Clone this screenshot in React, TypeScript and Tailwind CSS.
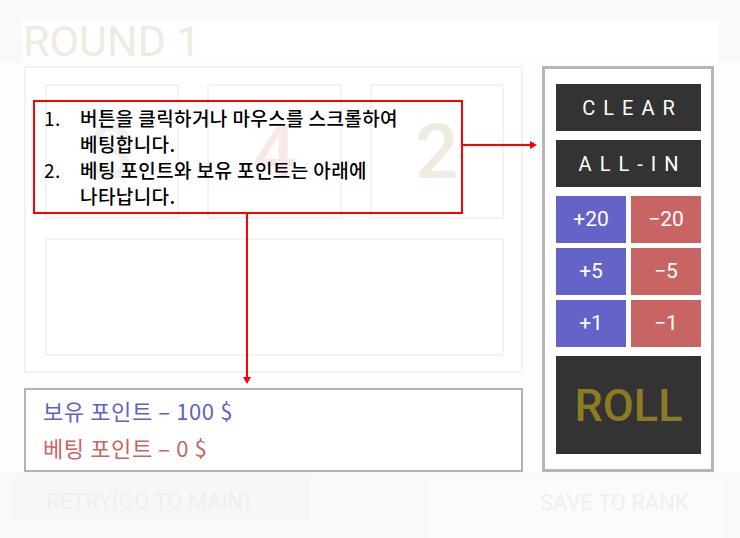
import React from "react";

const latin = "font-['Roboto','Noto_Sans_CJK_KR',sans-serif]";
const kr = "font-['Noto_Sans_CJK_KR','Noto_Sans',sans-serif]";

function Card({ n, color }: { n: string; color: string }) {
  return (
    <div className="w-[135px] h-[135px] border-2 border-[#f3f3f3] bg-white flex items-center justify-center">
      <span className={`${latin} text-[76px] font-medium leading-none ${color}`}>{n}</span>
    </div>
  );
}

function Btn({ label, cls }: { label: string; cls: string }) {
  return (
    <div className={`h-[47px] flex items-center justify-center text-white ${cls}`}>{label}</div>
  );
}

export default function App() {
  return (
    <div className={`relative w-[740px] h-[538px] overflow-hidden bg-[#f9f9f9] ${latin}`}>
      {/* header */}
      <div className="pt-[20px] pl-[22px]">
        <div className="w-[696px] h-[42px] bg-white flex items-center pl-[1px]">
          <span className="text-[43px] leading-none text-[#efebdf]">ROUND 1</span>
        </div>
      </div>

      {/* main */}
      <div className="flex pl-[24px] pt-[4px] bg-[#fdfdfd]">
        <div className="w-[499px] flex flex-col">
          <div className="h-[307px] border-2 border-[#f2f2f2] bg-white pt-[16px] pl-[19px] pr-[17px]">
            <div className="flex gap-[28px]">
              <Card n="3" color="text-[#f0f0f0]" />
              <Card n="4" color="text-[#f8e9e6]" />
              <Card n="2" color="text-[#efebdf]" />
            </div>
            <div className="mt-[19px] h-[118px] border-2 border-[#f3f3f3]" />
          </div>
          <div className="mt-[15px] h-[84px] border-2 border-[#b3b3b3] bg-white pl-[17px] pt-[7px] flex flex-col gap-[11px]">
            <div className={`${kr} text-[22px] leading-[26px] tracking-[0.6px] text-[#6262c6]`}>보유 포인트 – 100 $</div>
            <div className={`${kr} text-[22px] leading-[26px] tracking-[0.6px] text-[#c86565]`}>베팅 포인트 – 0 $</div>
          </div>
        </div>

        <div className="ml-[19px] w-[172px] h-[406px] border-[3px] border-[#b6b6b6] bg-white pt-[15px] pl-[11px]">
          <div className="w-[145px] flex flex-col">
            <Btn label="CLEAR" cls="bg-[#333333] text-[20px] tracking-[8px] pl-[8px]" />
            <Btn label="ALL-IN" cls="mt-[9px] bg-[#333333] text-[20px] tracking-[8px] pl-[8px]" />
            <div className="mt-[9px] grid grid-cols-2 gap-x-[5px] gap-y-[5px] text-[21px]">
              <Btn label="+20" cls="bg-[#6464c8]" />
              <Btn label="−20" cls="bg-[#c86464]" />
              <Btn label="+5" cls="bg-[#6464c8]" />
              <Btn label="−5" cls="bg-[#c86464]" />
              <Btn label="+1" cls="bg-[#6464c8]" />
              <Btn label="−1" cls="bg-[#c86464]" />
            </div>
            <div className="mt-[9px] h-[98px] bg-[#333333] flex items-center justify-center">
              <span className="text-[45px] font-medium leading-none text-[#8d7b24]">ROLL</span>
            </div>
          </div>
        </div>
      </div>

      {/* bottom */}
      <div className="flex justify-between mt-[4px]">
        <div className="ml-[13px] w-[297px] h-[45px] bg-[#f7f7f7] flex items-center pl-[33px] pt-[6px]">
          <span className="text-[22px] text-[#efefef]">RETRY(GO TO MAIN)</span>
        </div>
        <div className="mr-[14px] mt-[4px] w-[299px] h-[58px] bg-[#fbfbfb] pl-[113px] pt-[6px]">
          <span className="text-[22px] text-[#efefef]">SAVE TO RANK</span>
        </div>
      </div>

      {/* instruction overlay */}
      <div className={`absolute left-[33px] top-[100px] w-[430px] h-[114px] border-2 border-[#ff0000] ${kr} text-black text-[19px] tracking-[0.4px] leading-[26px] pt-[3px]`}>
        <div className="flex">
          <span className="w-[45px] pl-[9px]">1.</span>
          <span className="font-medium">버튼을 클릭하거나 마우스를 스크롤하여<br />베팅합니다.</span>
        </div>
        <div className="flex">
          <span className="w-[45px] pl-[9px]">2.</span>
          <span className="font-medium">베팅 포인트와 보유 포인트는 아래에<br />나타납니다.</span>
        </div>
      </div>

      {/* arrows */}
      <svg className="absolute left-0 top-0" width="740" height="538">
        <line x1="463" y1="145" x2="531" y2="145" stroke="#ff0000" strokeWidth="2" />
        <polygon points="537,145 530,141 530,149" fill="#ff0000" />
        <line x1="247" y1="214" x2="247" y2="378" stroke="#ff0000" strokeWidth="2" />
        <polygon points="247,384 243,377 251,377" fill="#ff0000" />
      </svg>
    </div>
  );
}
